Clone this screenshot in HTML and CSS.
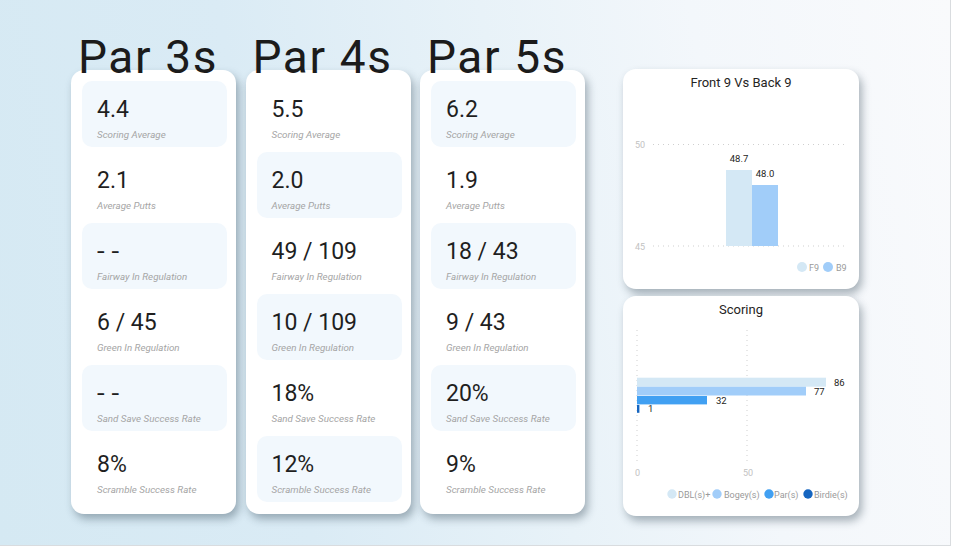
FILE: index.html
```html
<!DOCTYPE html>
<html lang="en">
<head>
<meta charset="utf-8">
<title>Par Stats</title>
<link rel="stylesheet" href="styles.css">
</head>
<body>
<div class="canvas">
  <div class="cols">
    <section class="col">
      <h1 class="par-title">Par 3s</h1>
      <div class="card">
        <div class="tile shade"><div class="val">4.4</div><div class="lbl">Scoring Average</div></div>
        <div class="tile"><div class="val">2.1</div><div class="lbl">Average Putts</div></div>
        <div class="tile shade"><div class="val dash">- -</div><div class="lbl">Fairway In Regulation</div></div>
        <div class="tile"><div class="val">6 / 45</div><div class="lbl">Green In Regulation</div></div>
        <div class="tile shade"><div class="val dash">- -</div><div class="lbl">Sand Save Success Rate</div></div>
        <div class="tile"><div class="val">8%</div><div class="lbl">Scramble Success Rate</div></div>
      </div>
    </section>
    <section class="col">
      <h1 class="par-title">Par 4s</h1>
      <div class="card">
        <div class="tile"><div class="val">5.5</div><div class="lbl">Scoring Average</div></div>
        <div class="tile shade"><div class="val">2.0</div><div class="lbl">Average Putts</div></div>
        <div class="tile"><div class="val">49 / 109</div><div class="lbl">Fairway In Regulation</div></div>
        <div class="tile shade"><div class="val">10 / 109</div><div class="lbl">Green In Regulation</div></div>
        <div class="tile"><div class="val">18%</div><div class="lbl">Sand Save Success Rate</div></div>
        <div class="tile shade"><div class="val">12%</div><div class="lbl">Scramble Success Rate</div></div>
      </div>
    </section>
    <section class="col">
      <h1 class="par-title">Par 5s</h1>
      <div class="card">
        <div class="tile shade"><div class="val">6.2</div><div class="lbl">Scoring Average</div></div>
        <div class="tile"><div class="val">1.9</div><div class="lbl">Average Putts</div></div>
        <div class="tile shade"><div class="val">18 / 43</div><div class="lbl">Fairway In Regulation</div></div>
        <div class="tile"><div class="val">9 / 43</div><div class="lbl">Green In Regulation</div></div>
        <div class="tile shade"><div class="val">20%</div><div class="lbl">Sand Save Success Rate</div></div>
        <div class="tile"><div class="val">9%</div><div class="lbl">Scramble Success Rate</div></div>
      </div>
    </section>
  </div>

  <div class="charts">
    <div class="chart-card">
      <div class="chart-title">Front 9 Vs Back 9</div>
      <svg class="chart-svg" width="236" height="194" viewBox="0 0 236 194">
        <line class="grid" x1="30" y1="49.5" x2="225" y2="49.5"/>
        <line class="grid" x1="30" y1="151" x2="225" y2="151"/>
        <text class="axis" x="12" y="52.5">50</text>
        <text class="axis" x="12" y="154.5">45</text>
        <rect x="103" y="75" width="26" height="76" fill="#d4e8f5"/>
        <rect x="129" y="90" width="26" height="61" fill="#a1cdf9"/>
        <text class="dlabel" x="116" y="67" text-anchor="middle">48.7</text>
        <text class="dlabel" x="142" y="82" text-anchor="middle">48.0</text>
        <circle cx="179" cy="172" r="5" fill="#d4e8f5"/>
        <text class="legend" x="186" y="175.5">F9</text>
        <circle cx="205" cy="172" r="5" fill="#a1cdf9"/>
        <text class="legend" x="213" y="175.5">B9</text>
      </svg>
    </div>
    <div class="chart-card">
      <div class="chart-title">Scoring</div>
      <svg class="chart-svg" width="236" height="194" viewBox="0 0 236 194">
        <line class="grid" x1="14" y1="8" x2="14" y2="140"/>
        <line class="grid" x1="124" y1="8" x2="124" y2="140"/>
        <rect x="14" y="55.7" width="189" height="9" fill="#d4e8f5"/>
        <rect x="14" y="64.7" width="169" height="8.8" fill="#a1cdf9"/>
        <rect x="14" y="74" width="70" height="8.4" fill="#41a0f2"/>
        <rect x="14" y="83" width="2.4" height="7.8" fill="#1565c0"/>
        <text class="dlabel" x="211" y="64">86</text>
        <text class="dlabel" x="191" y="72.5">77</text>
        <text class="dlabel" x="93" y="81.5">32</text>
        <text class="dlabel" x="25" y="90">1</text>
        <text class="axis" x="12" y="154">0</text>
        <text class="axis" x="120" y="154">50</text>
        <circle cx="49" cy="172" r="4.7" fill="#d4e8f5"/>
        <text class="legend" x="55" y="175.5">DBL(s)+</text>
        <circle cx="94" cy="172" r="4.7" fill="#a1cdf9"/>
        <text class="legend" x="101" y="175.5">Bogey(s)</text>
        <circle cx="146" cy="172" r="4.7" fill="#41a0f2"/>
        <text class="legend" x="151" y="175.5">Par(s)</text>
        <circle cx="185" cy="172" r="4.7" fill="#1565c0"/>
        <text class="legend" x="191" y="175.5">Birdie(s)</text>
      </svg>
    </div>
  </div>
</div>
</body>
</html>
```

FILE: styles.css
```css
html, body {
  margin: 0;
  padding: 0;
  background: #ffffff;
}

body {
  font-family: Roboto, "Liberation Sans", sans-serif;
  color: #252423;
}

.canvas {
  width: 951px;
  height: 546px;
  box-sizing: border-box;
  border-right: 1px solid #d9dcdf;
  border-bottom: 1px solid #d9dcdf;
  background: linear-gradient(80deg, #d5e9f3 0%, #daebf5 30%, #e8f2f8 55%, #f3f7fb 75%, #f9fafc 100%);
  display: flex;
  align-items: flex-start;
  padding: 34px 0 0 71px;
}

.cols {
  display: flex;
  gap: 9.5px;
}

.col {
  width: 165px;
  display: flex;
  flex-direction: column;
}

.par-title {
  position: relative;
  z-index: 1;
  margin: 0 0 -10px 7px;
  font-size: 46px;
  line-height: 46px;
  font-weight: 400;
  letter-spacing: 1.6px;
  color: #1b1b1b;
  white-space: nowrap;
}

.card {
  background: #ffffff;
  border-radius: 13px;
  box-shadow: 3px 5px 9px rgba(40, 60, 75, 0.38);
  padding: 11px 9px 12px 11px;
  display: flex;
  flex-direction: column;
  gap: 5px;
}

.tile {
  height: 66px;
  box-sizing: border-box;
  border-radius: 10px;
  padding: 17px 0 0 15px;
}

.tile.shade {
  background: #f2f8fd;
}

.val {
  font-size: 23px;
  line-height: 23px;
  color: #1f1f1f;
  white-space: nowrap;
}

.val.dash {
  transform-origin: left center;
  transform: scaleX(1.2);
}

.lbl {
  margin-top: 8px;
  font-size: 9.8px;
  line-height: 11px;
  font-style: italic;
  color: #a5a5a5;
  white-space: nowrap;
}

.charts {
  margin: 35px 0 0 38px;
  display: flex;
  flex-direction: column;
  gap: 7px;
}

.chart-card {
  width: 236px;
  height: 220px;
  background: #ffffff;
  border-radius: 13px;
  box-shadow: 3px 5px 9px rgba(40, 60, 75, 0.38);
  display: flex;
  flex-direction: column;
}

.chart-title {
  height: 26px;
  box-sizing: border-box;
  padding-top: 6px;
  text-align: center;
  font-size: 13px;
  line-height: 15px;
  color: #252423;
}

.chart-svg {
  display: block;
}

.grid {
  stroke: #cfcfcf;
  stroke-width: 1;
  stroke-dasharray: 1 4;
}

.axis {
  font-family: Roboto, "Liberation Sans", sans-serif;
  font-size: 9px;
  fill: #c2c2c2;
}

.dlabel {
  font-family: Roboto, "Liberation Sans", sans-serif;
  font-size: 9.5px;
  fill: #252423;
}

.legend {
  font-family: Roboto, "Liberation Sans", sans-serif;
  font-size: 9px;
  fill: #9a9a9a;
}
```
